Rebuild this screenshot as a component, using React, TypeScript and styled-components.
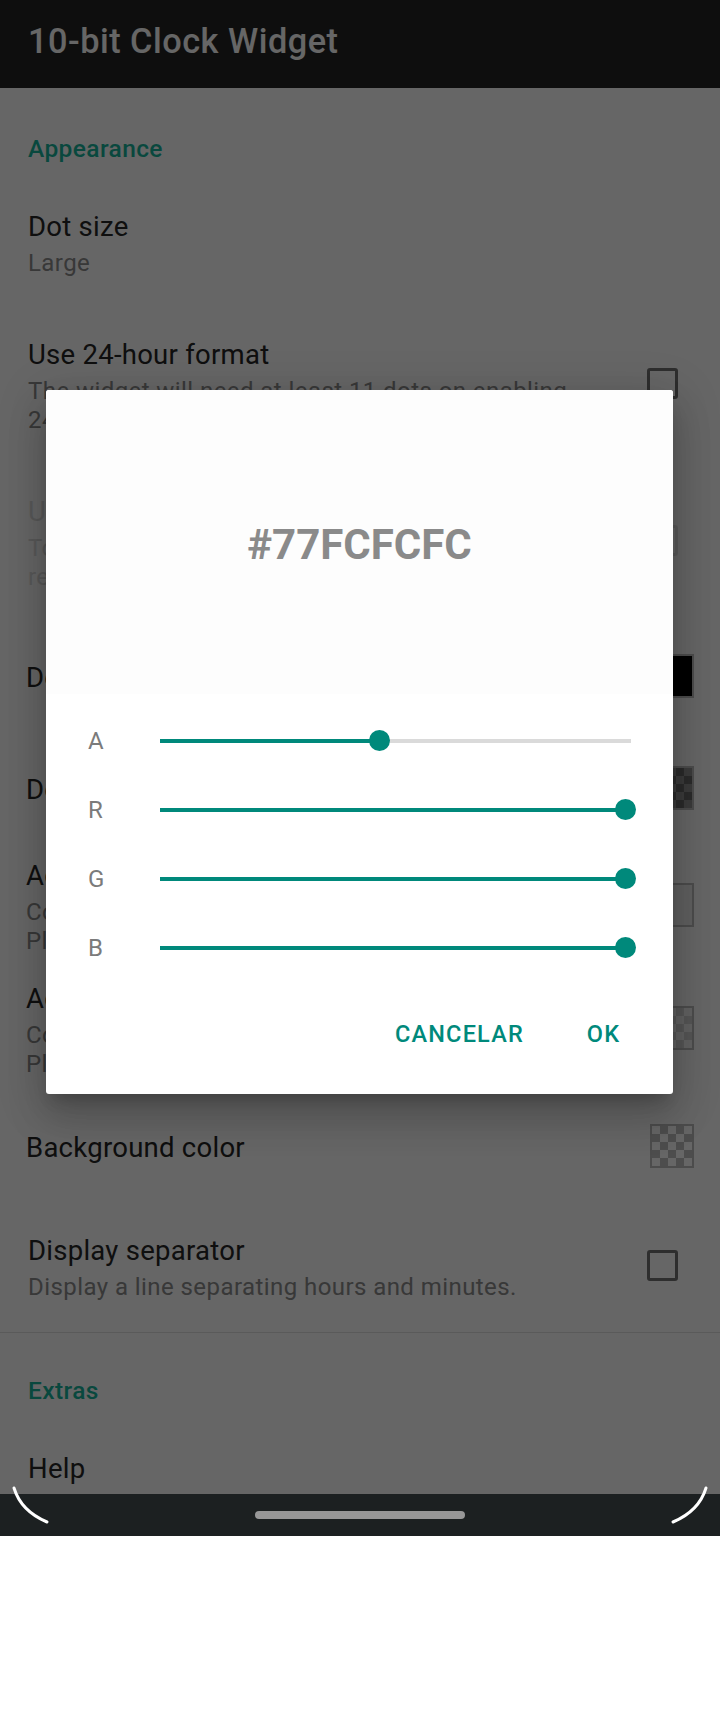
import React from "react";
import styled, { createGlobalStyle } from "styled-components";

const GlobalStyle = createGlobalStyle`
  html, body {
    margin: 0;
    padding: 0;
    background: #ffffff;
  }
  body {
    font-family: Roboto, "Noto Sans", sans-serif;
  }
  #root {
    width: 720px;
  }
`;

const TEAL = "#00897b";

const Screen = styled.div`
  position: relative;
  width: 720px;
  height: 1536px;
  overflow: hidden;
  background: #ffffff;
`;

const Toolbar = styled.header`
  box-sizing: border-box;
  height: 88px;
  display: flex;
  align-items: center;
  padding: 0 0 6px 28px;
  background: #232323;
`;

const ToolbarTitle = styled.h1`
  margin: 0;
  font: 500 34.3px/1 Roboto, sans-serif;
  letter-spacing: 0.5px;
  color: #ffffff;
`;

const SectionHeader = styled.div<{ $top: number }>`
  padding: ${(p) => p.$top}px 28px 17px;
  font: 500 24.5px/28px Roboto, sans-serif;
  letter-spacing: 0.4px;
  color: #17b59c;
`;

const Divider = styled.div`
  height: 1px;
  background: #e0e0e0;
`;

const PrefRow = styled.div<{ $kind: "plain" | "color" }>`
  box-sizing: border-box;
  display: flex;
  align-items: center;
  padding: ${(p) =>
    p.$kind === "color" ? "13.5px 0 13.5px 26px" : "30.5px 0 30.5px 28px"};
  min-height: ${(p) => (p.$kind === "color" ? "112px" : "0")};
`;

const PrefText = styled.div`
  flex: 1;
  min-width: 0;
  padding-right: 27px;
`;

const PrefTitle = styled.div<{ $disabled?: boolean }>`
  font: 400 27.5px/32px Roboto, sans-serif;
  letter-spacing: 0.26px;
  color: ${(p) => (p.$disabled ? "#dcdcdc" : "#262626")};
`;

const PrefSummary = styled.div<{ $disabled?: boolean }>`
  margin-top: 6px;
  font: 400 24px/29px Roboto, sans-serif;
  letter-spacing: 0.43px;
  color: ${(p) => (p.$disabled ? "#dcdcdc" : "#8c8c8c")};
`;

const NoWrap = styled.span`
  white-space: nowrap;
`;

const CheckBox = styled.span<{ $disabled?: boolean }>`
  box-sizing: border-box;
  flex: none;
  width: 31px;
  height: 31px;
  margin: 0 42px 6px 0;
  border: 3px solid ${(p) => (p.$disabled ? "#e4e4e4" : "#737373")};
  border-radius: 3px;
`;

const Swatch = styled.span<{ $a: string; $b?: string }>`
  box-sizing: border-box;
  flex: none;
  width: 44px;
  height: 44px;
  margin: 0 26px 5px 0;
  border: 2px solid #bdbdbd;
  background: ${(p) =>
    p.$b
      ? `repeating-conic-gradient(${p.$a} 0% 25%, ${p.$b} 0% 50%) 0 0 / 16px 16px`
      : p.$a};
`;

const Scrim = styled.div`
  position: absolute;
  inset: 0;
  box-sizing: border-box;
  padding: 390px 1px 0 0;
  display: flex;
  justify-content: center;
  align-items: flex-start;
  background: rgba(0, 0, 0, 0.6);
`;

const Dialog = styled.div`
  width: 627px;
  background: #ffffff;
  border-radius: 3px;
  box-shadow: 0 11px 15px -7px rgba(0, 0, 0, 0.2),
    0 24px 38px 3px rgba(0, 0, 0, 0.14), 0 9px 46px 8px rgba(0, 0, 0, 0.12);
`;

const PreviewHeader = styled.div`
  box-sizing: border-box;
  height: 304px;
  padding-top: 5px;
  display: flex;
  align-items: center;
  justify-content: center;
  background: #fdfdfd;
  border-radius: 3px 3px 0 0;
`;

const HexText = styled.span`
  font: 700 42px/1 Roboto, sans-serif;
  color: #8a8a8a;
`;

const SliderList = styled.div`
  padding: 12px 42px 0 42px;
`;

const SliderRow = styled.div`
  height: 69px;
  display: grid;
  grid-template-columns: 72px 1fr;
  align-items: center;
`;

const SliderLabel = styled.span`
  font: 400 24px/1 Roboto, sans-serif;
  color: #7b7b7b;
`;

const Track = styled.div`
  position: relative;
  height: 4px;
  background: #dadada;
`;

const TrackFill = styled.div`
  height: 100%;
  background: ${TEAL};
`;

const Thumb = styled.div`
  position: absolute;
  top: 50%;
  width: 21px;
  height: 21px;
  margin: -10.5px 0 0 -10.5px;
  border-radius: 50%;
  background: ${TEAL};
`;

const ButtonBar = styled.div`
  box-sizing: border-box;
  height: 112px;
  padding: 22px 16px 0 0;
  display: flex;
  justify-content: flex-end;
  align-items: flex-start;
  gap: 13px;
`;

const TextButton = styled.button`
  height: 60px;
  min-width: 107px;
  padding: 0 13px;
  display: flex;
  align-items: center;
  justify-content: center;
  border: none;
  background: transparent;
  font: 500 23.5px/normal Roboto, sans-serif;
  letter-spacing: 1.2px;
  color: ${TEAL};
`;

const NavBar = styled.div`
  position: absolute;
  left: 0;
  right: 0;
  bottom: 0;
  height: 42px;
  display: flex;
  align-items: center;
  justify-content: center;
  background: #1c2021;
`;

const NavPill = styled.div`
  width: 210px;
  height: 8px;
  border-radius: 4px;
  background: #979797;
`;

const CornerArcs = styled.svg`
  position: absolute;
  left: 0;
  bottom: 0;
  width: 720px;
  height: 56px;
  pointer-events: none;
`;

type Channel = { label: string; value: number };

const channels: Channel[] = [
  { label: "A", value: 0x77 },
  { label: "R", value: 0xfc },
  { label: "G", value: 0xfc },
  { label: "B", value: 0xfc },
];

const ColorSlider: React.FC<Channel> = ({ label, value }) => {
  const pct = (value / 255) * 100;
  return (
    <SliderRow>
      <SliderLabel>{label}</SliderLabel>
      <Track>
        <TrackFill style={{ width: `${pct}%` }} />
        <Thumb style={{ left: `${pct}%` }} />
      </Track>
    </SliderRow>
  );
};

export default function App() {
  return (
    <>
      <GlobalStyle />
      <Screen>
        <Toolbar>
          <ToolbarTitle>10-bit Clock Widget</ToolbarTitle>
        </Toolbar>

        <SectionHeader $top={47}>Appearance</SectionHeader>

        <PrefRow $kind="plain">
          <PrefText>
            <PrefTitle>Dot size</PrefTitle>
            <PrefSummary>Large</PrefSummary>
          </PrefText>
        </PrefRow>

        <PrefRow $kind="plain">
          <PrefText>
            <PrefTitle>Use 24-hour format</PrefTitle>
            <PrefSummary>
              The widget will need at least 11 dots on enabling{" "}
              <NoWrap>24-hour</NoWrap> format.
            </PrefSummary>
          </PrefText>
          <CheckBox />
        </PrefRow>

        <PrefRow $kind="plain">
          <PrefText>
            <PrefTitle $disabled>Use dynamic colors</PrefTitle>
            <PrefSummary $disabled>
              To use wallpaper-based dynamic colors, this option requires
              Android 12 or newer.
            </PrefSummary>
          </PrefText>
          <CheckBox $disabled />
        </PrefRow>

        <PrefRow $kind="color">
          <PrefText>
            <PrefTitle>Dot on color</PrefTitle>
          </PrefText>
          <Swatch $a="#000000" />
        </PrefRow>

        <PrefRow $kind="color">
          <PrefText>
            <PrefTitle>Dot off color</PrefTitle>
          </PrefText>
          <Swatch $a="#6b6b6b" $b="#939393" />
        </PrefRow>

        <PrefRow $kind="color">
          <PrefText>
            <PrefTitle>Accent on color</PrefTitle>
            <PrefSummary>
              Color of the minute dots that are switched on.
              <br />
              Please enable accent mode first.
            </PrefSummary>
          </PrefText>
          <Swatch $a="#f0f0f0" />
        </PrefRow>

        <PrefRow $kind="color">
          <PrefText>
            <PrefTitle>Accent off color</PrefTitle>
            <PrefSummary>
              Color of the minute dots that are switched off.
              <br />
              Please enable accent mode first.
            </PrefSummary>
          </PrefText>
          <Swatch $a="#d6d6d6" $b="#f6f6f6" />
        </PrefRow>

        <PrefRow $kind="color">
          <PrefText>
            <PrefTitle>Background color</PrefTitle>
          </PrefText>
          <Swatch $a="#c0c0c0" $b="#ffffff" />
        </PrefRow>

        <PrefRow $kind="plain">
          <PrefText>
            <PrefTitle>Display separator</PrefTitle>
            <PrefSummary>Display a line separating hours and minutes.</PrefSummary>
          </PrefText>
          <CheckBox />
        </PrefRow>

        <Divider />

        <SectionHeader $top={44}>Extras</SectionHeader>

        <PrefRow $kind="plain">
          <PrefText>
            <PrefTitle>Help</PrefTitle>
          </PrefText>
        </PrefRow>

        <Scrim>
          <Dialog>
            <PreviewHeader>
              <HexText>#77FCFCFC</HexText>
            </PreviewHeader>
            <SliderList>
              {channels.map((c) => (
                <ColorSlider key={c.label} {...c} />
              ))}
            </SliderList>
            <ButtonBar>
              <TextButton>CANCELAR</TextButton>
              <TextButton>OK</TextButton>
            </ButtonBar>
          </Dialog>
        </Scrim>

        <NavBar>
          <NavPill />
        </NavBar>

        <CornerArcs viewBox="0 0 720 56">
          <path
            d="M14 8 Q21 31 47 42"
            fill="none"
            stroke="#ffffff"
            strokeWidth="3"
            strokeLinecap="round"
          />
          <path
            d="M706 8 Q699 31 673 42"
            fill="none"
            stroke="#ffffff"
            strokeWidth="3"
            strokeLinecap="round"
          />
        </CornerArcs>
      </Screen>
    </>
  );
}
